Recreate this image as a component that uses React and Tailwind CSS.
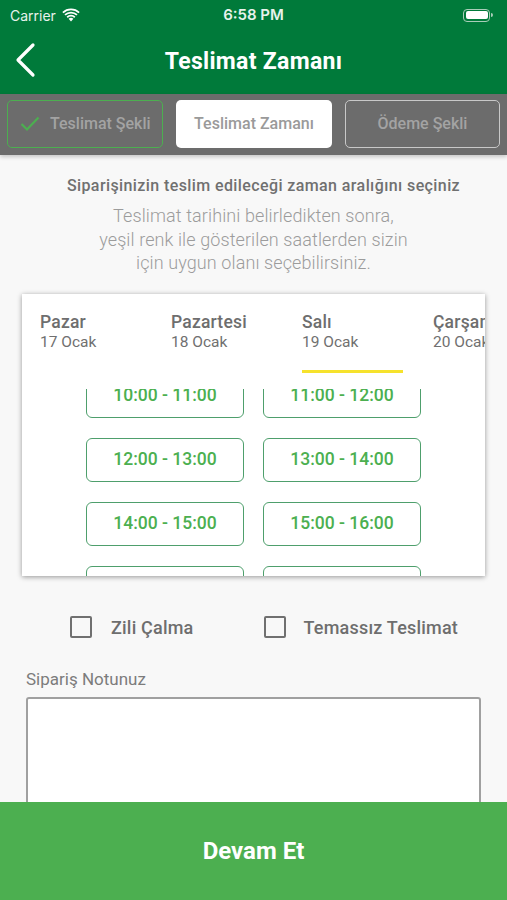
import React from "react";

const slots = [
  ["10:00 - 11:00", "11:00 - 12:00"],
  ["12:00 - 13:00", "13:00 - 14:00"],
  ["14:00 - 15:00", "15:00 - 16:00"],
  ["16:00 - 17:00", "17:00 - 18:00"],
];

const days = [
  ["Pazar", "17 Ocak"],
  ["Pazartesi", "18 Ocak"],
  ["Salı", "19 Ocak"],
  ["Çarşamba", "20 Ocak"],
];

export default function App() {
  return (
    <div
      className="w-[507px] h-[900px] flex flex-col overflow-hidden bg-[#f8f8f8]"
      style={{ fontFamily: "Roboto, 'Noto Sans', sans-serif" }}
    >
      {/* Status bar */}
      <div className="h-[30px] shrink-0 bg-[#007a3a] flex items-center justify-between px-[10px] text-white relative">
        <div className="flex items-center gap-[6px]" style={{ fontFamily: "Inter, 'Noto Sans', sans-serif" }}>
          <span className="text-[14px] text-[#e8f2ec]">Carrier</span>
          <svg width="18" height="14" viewBox="0 0 18 14" fill="white">
            <path d="M9 13.5 L6.6 10.8 A3.6 3.6 0 0 1 11.4 10.8 Z" />
            <path d="M4.6 8.6 A6.4 6.4 0 0 1 13.4 8.6 L12.2 9.9 A4.6 4.6 0 0 0 5.8 9.9 Z" />
            <path d="M2.4 6.3 A9.6 9.6 0 0 1 15.6 6.3 L14.4 7.6 A7.8 7.8 0 0 0 3.6 7.6 Z" />
            <path d="M0.3 4 A12.6 12.6 0 0 1 17.7 4 L16.5 5.3 A10.8 10.8 0 0 0 1.5 5.3 Z" />
          </svg>
        </div>
        <span
          className="absolute left-1/2 -translate-x-1/2 text-[15px] font-semibold text-[#e8f2ec]"
          style={{ fontFamily: "Inter, 'Noto Sans', sans-serif" }}
        >
          6:58 PM
        </span>
        <div className="flex items-center mr-[4px]">
          <div className="w-[27px] h-[13px] rounded-[4px] border border-[#a9cdb8] p-[1.5px]">
            <div className="w-full h-full rounded-[2px] bg-white" />
          </div>
          <div className="w-[2px] h-[4px] bg-[#a9cdb8] rounded-r-sm ml-[1px]" />
        </div>
      </div>

      {/* Nav bar */}
      <div className="h-[64px] shrink-0 bg-[#007a3a] flex items-center relative">
        <svg className="absolute left-[14px] top-[12px]" width="26" height="36" viewBox="0 0 26 36">
          <path d="M19 3 L4 18 L19 33" fill="none" stroke="white" strokeWidth="3.2" strokeLinecap="round" strokeLinejoin="round" />
        </svg>
        <div className="w-full text-center text-white text-[23px] font-bold tracking-[0.3px]">Teslimat Zamanı</div>
      </div>

      {/* Tab bar */}
      <div className="h-[61px] shrink-0 bg-[#6c6c6c] flex gap-[13px] px-[7px] pt-[6px] shadow-[0_2px_4px_rgba(0,0,0,0.2)] relative z-10">
        <div className="w-[156px] h-[48px] rounded-[5px] border border-[#4caf50] flex items-center relative">
          <svg className="absolute left-[12px] top-[15px]" width="20" height="16" viewBox="0 0 20 16">
            <path d="M1.5 8 L7 13.5 L18.5 1.5" fill="none" stroke="#4caf50" strokeWidth="2.2" />
          </svg>
          <span className="ml-[42px] text-[16px] font-medium text-[#a3a3a3]">Teslimat Şekli</span>
        </div>
        <div className="w-[156px] h-[48px] rounded-[5px] bg-white flex items-center justify-center">
          <span className="text-[16px] font-medium text-[#9a9a9a]">Teslimat Zamanı</span>
        </div>
        <div className="w-[155px] h-[48px] rounded-[5px] border border-[#c8c8c8] flex items-center justify-center">
          <span className="text-[16px] font-medium text-[#a3a3a3]">Ödeme Şekli</span>
        </div>
      </div>

      {/* Content */}
      <div className="flex-1 min-h-0 overflow-hidden flex flex-col">
        <div className="pt-[21px] text-center text-[16px] leading-[20px] font-medium tracking-[0.4px] text-[#707070] pl-[20px]">
          Siparişinizin teslim edileceği zaman aralığını seçiniz
        </div>
        <div className="mt-[8px] text-center text-[18px] leading-[23.5px] font-light tracking-[0.1px] text-[#9c9c9c]">
          Teslimat tarihini belirledikten sonra,
          <br />
          yeşil renk ile gösterilen saatlerden sizin
          <br />
          için uygun olanı seçebilirsiniz.
        </div>

        {/* Card */}
        <div className="mt-[19px] mx-[22px] h-[282px] shrink-0 bg-white shadow-[0_1px_5px_rgba(0,0,0,0.4)] flex flex-col overflow-hidden">
          <div className="h-[95px] shrink-0 flex pl-[18px] pt-[18px] overflow-hidden">
            {days.map(([d, t], i) => (
              <div key={d} className="w-[131px] shrink-0 flex flex-col">
                <span className="text-[17.5px] leading-[20px] font-medium tracking-[0.2px] text-[#6e6e6e] whitespace-nowrap">{d}</span>
                <span className="text-[15.5px] leading-[20px] text-[#707070] whitespace-nowrap">{t}</span>
                {i === 2 && <div className="mt-[18px] w-[101px] h-[3px] bg-[#f6e22c]" />}
              </div>
            ))}
          </div>
          <div className="flex-1 min-h-0 overflow-hidden">
            <div className="-mt-[15px] flex flex-col gap-[20px]">
              {slots.map((row, i) => (
                <div key={i} className="flex justify-center gap-[19px]">
                  {row.map((s) => (
                    <div
                      key={s}
                      className="w-[158px] h-[44px] rounded-[6px] border-[1.5px] border-[#4e9f6c] flex items-center justify-center text-[17.5px] font-medium text-[#4caf50]"
                    >
                      {s}
                    </div>
                  ))}
                </div>
              ))}
            </div>
          </div>
        </div>

        {/* Checkboxes */}
        <div className="mt-[38px] flex items-center pl-[70px] text-[18px] font-medium tracking-[0.2px] text-[#6e6e6e]">
          <div className="w-[22px] h-[22px] border-2 border-[#707070] rounded-[2px]" />
          <span className="ml-[19px]">Zili Çalma</span>
          <div className="ml-[70px] w-[22px] h-[22px] border-2 border-[#707070] rounded-[2px]" />
          <span className="ml-[18px]">Temassız Teslimat</span>
        </div>

        <div className="mt-[28px] pl-[26px] text-[17px] leading-[20px] text-[#7c7c7c]">Sipariş Notunuz</div>
        <div className="mt-[8px] mx-[26px] h-[160px] shrink-0 bg-white border-2 border-[#a0a0a0] rounded-[3px]" />
      </div>

      {/* Button */}
      <div className="h-[98px] shrink-0 bg-[#4caf50] flex items-center justify-center">
        <span className="text-white text-[24px] font-bold">Devam Et</span>
      </div>
    </div>
  );
}
